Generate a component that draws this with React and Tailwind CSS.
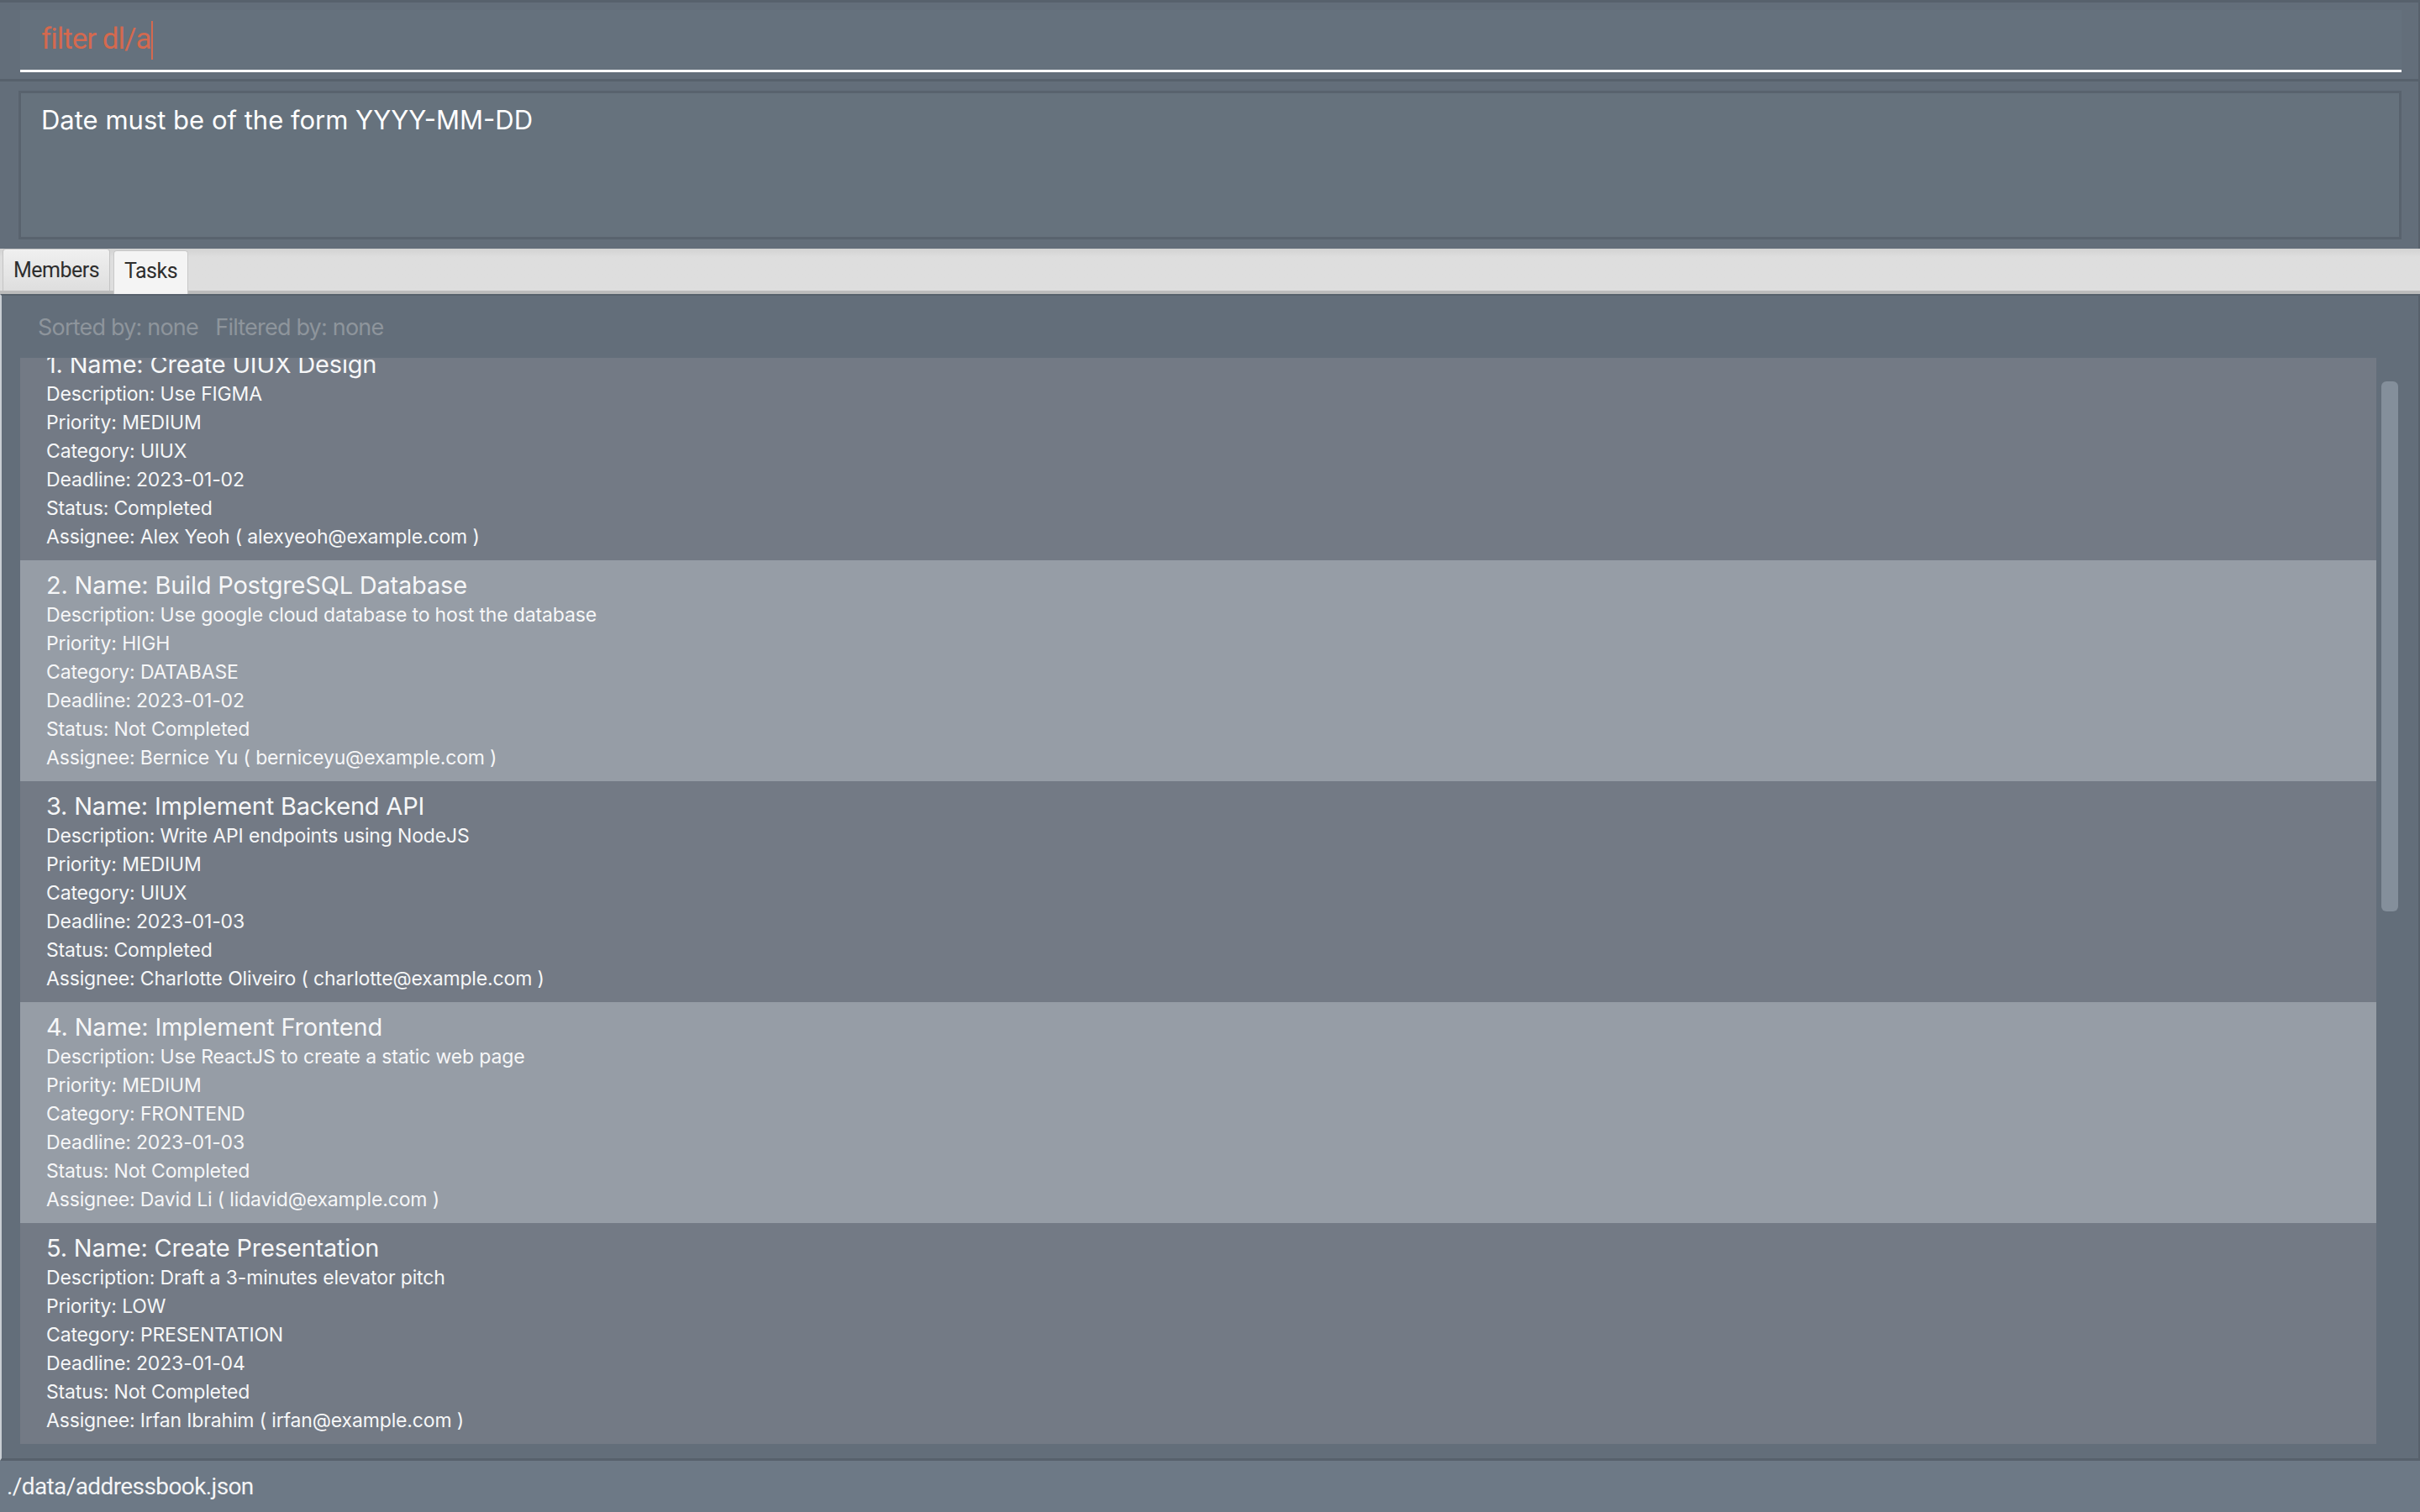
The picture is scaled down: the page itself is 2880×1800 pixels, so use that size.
import React from "react";

const tasks = [
  { n: 1, name: "Create UIUX Design", desc: "Use FIGMA", pri: "MEDIUM", cat: "UIUX", dl: "2023-01-02", st: "Completed", as: "Alex Yeoh ( alexyeoh@example.com )" },
  { n: 2, name: "Build PostgreSQL Database", desc: "Use google cloud database to host the database", pri: "HIGH", cat: "DATABASE", dl: "2023-01-02", st: "Not Completed", as: "Bernice Yu ( berniceyu@example.com )" },
  { n: 3, name: "Implement Backend API", desc: "Write API endpoints using NodeJS", pri: "MEDIUM", cat: "UIUX", dl: "2023-01-03", st: "Completed", as: "Charlotte Oliveiro ( charlotte@example.com )" },
  { n: 4, name: "Implement Frontend", desc: "Use ReactJS to create a static web page", pri: "MEDIUM", cat: "FRONTEND", dl: "2023-01-03", st: "Not Completed", as: "David Li ( lidavid@example.com )" },
  { n: 5, name: "Create Presentation", desc: "Draft a 3-minutes elevator pitch", pri: "LOW", cat: "PRESENTATION", dl: "2023-01-04", st: "Not Completed", as: "Irfan Ibrahim ( irfan@example.com )" },
];

const inter = { fontFamily: "Inter, Roboto, 'Liberation Sans', sans-serif" };

function Card({ t, i }) {
  const bg = i % 2 === 0 ? "bg-[#737a85]" : "bg-[#969da6]";
  return (
    <div className={`${bg} h-[263px] shrink-0 pl-[31px] pt-[12px] text-[#f6f7f8]`} style={inter}>
      <div className="text-[29px] leading-[36px] tracking-[-0.2px]">{t.n}. Name: {t.name}</div>
      <div className="text-[23px] leading-[34px] tracking-[-0.15px]">
        <div>Description: {t.desc}</div>
        <div>Priority: {t.pri}</div>
        <div>Category: {t.cat}</div>
        <div>Deadline: {t.dl}</div>
        <div>Status: {t.st}</div>
        <div>Assignee: {t.as}</div>
      </div>
    </div>
  );
}

export default function App() {
  return (
    <div className="w-[2880px] h-[1800px] bg-[#636e7a] flex flex-col overflow-hidden" style={{ fontFamily: "Roboto, 'Liberation Sans', sans-serif" }}>
      {/* command box */}
      <div className="h-[97px] shrink-0 border-t-[3px] border-b-[3px] border-[#57616c] border-r-[2px] pl-[24px] pr-[20px] pt-[9px]">
        <div className="h-[74px] bg-[#65717d] border-b-[3px] border-white flex items-center pl-[25px] pt-[2px] pb-[2px]">
          <span className="text-[35px] text-[#d4694f] tracking-[-1px]">filter dl/a</span>
          <span className="w-[2px] h-[46px] bg-[#d4694f] ml-[1px]"></span>
        </div>
      </div>
      {/* result box */}
      <div className="h-[199px] shrink-0 pl-[22px] pr-[20px] pt-[11px] pb-[11px] border-r-[2px] border-[#57616c]">
        <div className="h-full border-[3px] border-[#59636e] bg-[#66727d] pl-[24px] pt-[12px]">
          <div className="text-[31px] text-white leading-[40px]" style={inter}>Date must be of the form YYYY-MM-DD</div>
        </div>
      </div>
      {/* tabs */}
      <div className="h-[54px] shrink-0 bg-gradient-to-b from-[#d2d2d2] to-[#dedede] to-[20%] border-b-[4px] border-[#bcbcbc] flex items-end pl-[3px] gap-[4px]">
        <div className="h-[50px] w-[128px] rounded-t-[4px] border border-[#c4c4c4] border-b-0 bg-gradient-to-b from-[#f0f0f0] to-[#dedede] flex items-center justify-center text-[25px] text-[#2e2e2e] tracking-[-0.5px]">Members</div>
        <div className="h-[52px] w-[89px] -mb-[4px] rounded-t-[4px] border border-[#c8c8c8] border-b-0 bg-[#f4f4f4] flex items-center justify-center text-[25px] text-[#2e2e2e] tracking-[-0.5px] pb-[4px]">Tasks</div>
      </div>
      {/* content */}
      <div className="flex-1 min-h-0 flex flex-col border-t-[2px] border-[#57616c] border-l-[2px] border-l-[#c9ced3] border-r-[2px] border-r-[#57616c] border-b-[3px] border-b-[#57616c]">
        <div className="h-[74px] shrink-0 pl-[43px] pt-[20px] text-[27px] text-[#8e959c] tracking-[-0.8px] leading-[36px]" style={inter}>
          Sorted by: none&nbsp;&nbsp;&nbsp;Filtered by: none
        </div>
        <div className="flex-1 min-h-0 flex pl-[22px] pr-[20px] pb-[16px]">
          <div className="flex-1 min-w-0 overflow-hidden flex flex-col">
            <div className="-mt-[22px] flex flex-col">
              {tasks.map((t, i) => (
                <Card key={t.n} t={t} i={i} />
              ))}
            </div>
          </div>
          <div className="w-[30px] shrink-0 pl-[6px] pt-[28px]">
            <div className="w-[20px] h-[631px] rounded-[6px] bg-[#848f9b]"></div>
          </div>
        </div>
      </div>
      {/* status bar */}
      <div className="h-[61px] shrink-0 bg-[#6d7986] flex items-center pl-[8px] text-[28px] text-[#f4f5f6] tracking-[-0.6px]">./data/addressbook.json</div>
    </div>
  );
}
